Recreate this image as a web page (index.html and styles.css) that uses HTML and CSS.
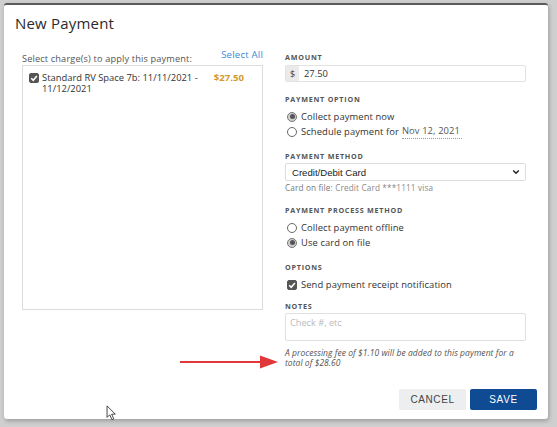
FILE: index.html
```html
<!DOCTYPE html>
<html>
<head>
<meta charset="utf-8">
<link rel="stylesheet" href="styles.css">
</head>
<body>
<div class="backdrop">
  <div class="modal">
    <h1 class="title">New Payment</h1>
    <div class="cols">
      <div class="left">
        <div class="left-head">
          <span class="hint">Select charge(s) to apply this payment:</span>
          <a class="select-all">Select All</a>
        </div>
        <div class="charges">
          <div class="charge">
            <span class="cbox checked"><svg viewBox="0 0 10 10" width="10" height="10"><path d="M2.2 5.2 L4.2 7.2 L7.9 2.9" fill="none" stroke="#fff" stroke-width="1.6"/></svg></span>
            <span class="charge-name">Standard RV Space 7b: 11/11/2021 - 11/12/2021</span>
            <span class="charge-amt">$27.50</span>
          </div>
        </div>
      </div>
      <div class="right">
        <div class="label first">AMOUNT</div>
        <div class="input-group">
          <span class="addon">$</span>
          <span class="val">27.50</span>
        </div>

        <div class="label">PAYMENT OPTION</div>
        <div class="opt"><span class="radio on"></span>Collect payment now</div>
        <div class="opt"><span class="radio"></span>Schedule payment for <span class="date">Nov 12, 2021</span></div>

        <div class="label">PAYMENT METHOD</div>
        <div class="select">
          <span>Credit/Debit Card</span>
          <svg viewBox="0 0 10 10" width="8" height="8"><path d="M1.5 3 L5 6.6 L8.5 3" fill="none" stroke="#222" stroke-width="1.8"/></svg>
        </div>
        <div class="cardfile"><b>Card on file:</b> Credit Card ***1111 visa</div>

        <div class="label">PAYMENT PROCESS METHOD</div>
        <div class="opt"><span class="radio"></span>Collect payment offline</div>
        <div class="opt"><span class="radio on"></span>Use card on file</div>

        <div class="label">OPTIONS</div>
        <div class="opt"><span class="cbox checked"><svg viewBox="0 0 10 10" width="10" height="10"><path d="M2.2 5.2 L4.2 7.2 L7.9 2.9" fill="none" stroke="#fff" stroke-width="1.6"/></svg></span>Send payment receipt notification</div>

        <div class="label notes-label">NOTES</div>
        <div class="notes">Check #, etc</div>
        <p class="fee">A processing fee of $1.10 will be added to this payment for a total of $28.60</p>
      </div>
    </div>
    <div class="footer">
      <button class="btn cancel">CANCEL</button>
      <button class="btn save">SAVE</button>
    </div>
    <svg class="arrow" viewBox="0 0 100 16" width="100" height="16"><path d="M0 8 L86 8" stroke="#e0383a" stroke-width="2.2"/><path d="M80 1.5 L98 8 L80 14.5 Z" fill="#e0383a"/></svg>
    <svg class="cursor" viewBox="0 0 12 18" width="11" height="16"><path d="M1 1 L1 14 L4 11 L6.5 16.5 L8.5 15.6 L6.2 10.3 L10.3 10.3 Z" fill="#fff" stroke="#333" stroke-width="1"/></svg>
  </div>
</div>
</body>
</html>
```
FILE: styles.css
```css
* { box-sizing: border-box; }
html, body { margin: 0; padding: 0; }
body {
  width: 557px;
  height: 427px;
  background: #cfcfcf;
  font-family: "Open Sans", "Noto Sans", sans-serif;
  color: #333;
  overflow: hidden;
}
.backdrop {
  padding: 3px 0 0 4px;
}
.modal {
  position: relative;
  width: 544px;
  height: 416px;
  background: #fff;
  border-top: 2px solid #5b5b5b;
  border-radius: 3px;
  box-shadow: 1px 2px 4px rgba(0,0,0,0.25);
  padding: 0 22px 0 18px;
  display: flex;
  flex-direction: column;
}
.title {
  margin: 0 0 0 -7px;
  height: 43px;
  padding-top: 7px;
  font-size: 15px;
  font-weight: 400;
  line-height: 22px;
  color: #2b2b2b;
  letter-spacing: 0.2px;
}
.cols {
  display: grid;
  grid-template-columns: 241px 241px;
  column-gap: 22px;
}
.left { display: flex; flex-direction: column; padding-top: 3px; }
.left-head {
  height: 14px;
  display: flex;
  justify-content: space-between;
  align-items: flex-end;
  position: relative;
}
.hint {
  font-size: 9.2px;
  color: #555;
  line-height: 12px;
  letter-spacing: 0.15px;
}
.select-all {
  font-size: 9.6px;
  color: #3b8ad6;
  line-height: 12px;
  position: relative;
  top: -4px;
  letter-spacing: 0.2px;
}
.charges {
  height: 245px;
  border: 1px solid #dcdcdc;
  padding: 6px 8px 0 6px;
}
.charge {
  display: flex;
  align-items: flex-start;
  gap: 3px;
}
.charge .cbox { margin-top: 1px; }
.charge-name {
  flex: 1;
  font-size: 9.4px;
  line-height: 11px;
  color: #333;
  padding-right: 6px;
}
.charge-amt {
  font-size: 9.6px;
  font-weight: 700;
  color: #d39a2c;
  line-height: 11px;
  margin-right: 10px;
}
.cbox {
  width: 10px;
  height: 10px;
  border-radius: 2px;
  border: 1px solid #555;
  display: inline-flex;
  flex: none;
}
.cbox.checked { background: #555; }
.cbox svg { margin: -1px; }
.right { display: flex; flex-direction: column; }
.label {
  font-size: 7.2px;
  font-weight: 700;
  letter-spacing: 0.75px;
  color: #555;
  height: 10px;
  line-height: 10px;
  margin-top: 12px;
}
.label.first { margin-top: 4px; }
.label.notes-label { margin-top: 9px; }
.input-group {
  margin-top: 3px;
  height: 17px;
  border: 1px solid #e2e2e2;
  border-radius: 2px;
  display: flex;
  align-items: center;
  font-size: 9.4px;
  color: #333;
}
.addon {
  width: 13px;
  height: 100%;
  background: #ebebeb;
  display: flex;
  align-items: center;
  justify-content: center;
  font-size: 9px;
  color: #444;
}
.val { padding-left: 5px; }
.opt {
  height: 15px;
  display: flex;
  align-items: center;
  gap: 4px;
  font-size: 9.4px;
  color: #333;
  padding-left: 2px;
  letter-spacing: 0.1px;
}
.label + .opt { margin-top: 5px; }
.radio {
  width: 10px;
  height: 10px;
  border-radius: 50%;
  border: 1px solid #666;
  flex: none;
  display: inline-flex;
  align-items: center;
  justify-content: center;
  background: #fff;
}
.radio.on { background: #cfcfcf; border-color: #777; }
.radio.on::after {
  content: "";
  width: 5px;
  height: 5px;
  border-radius: 50%;
  background: #555;
}
.date {
  margin-left: -1px;
  color: #555;
  border-bottom: 1px dotted #999;
  line-height: 12px;
  padding: 0 2px 1px 0;
}
.select {
  margin-top: 2px;
  height: 18px;
  border: 1px solid #dedede;
  border-radius: 2px;
  display: flex;
  align-items: center;
  justify-content: space-between;
  padding: 0 5px 0 6px;
  font-family: "Liberation Sans", Arial, sans-serif;
  font-size: 9.6px;
  color: #222;
}
.cardfile {
  margin-top: 2px;
  height: 10px;
  line-height: 10px;
  font-size: 8.2px;
  color: #888;
  letter-spacing: 0.15px;
}
.cardfile b { font-weight: 400; color: #777; }
.notes {
  margin-top: 2px;
  height: 28px;
  border: 1px solid #e0e0e0;
  border-radius: 2px;
  padding: 3px 4px;
  font-size: 9.2px;
  color: #bbb;
  line-height: 12px;
}
.fee {
  margin: 7px 0 0;
  font-size: 8.5px;
  font-style: italic;
  line-height: 10px;
  color: #555;
  letter-spacing: 0.05px;
}
.footer {
  margin-top: auto;
  margin-bottom: 9px;
  margin-right: -11px;
  display: flex;
  justify-content: flex-end;
  gap: 4px;
}
.btn {
  width: 67px;
  height: 21px;
  border: none;
  border-radius: 2px;
  font-family: "Liberation Sans", Arial, sans-serif;
  font-size: 10px;
  letter-spacing: 0.6px;
  cursor: pointer;
}
.cancel { background: #eceef0; color: #444; }
.save { background: #0e4b93; color: #fff; }
.arrow {
  position: absolute;
  left: 176px;
  top: 349px;
}
.cursor {
  position: absolute;
  left: 102px;
  top: 400px;
}
```
